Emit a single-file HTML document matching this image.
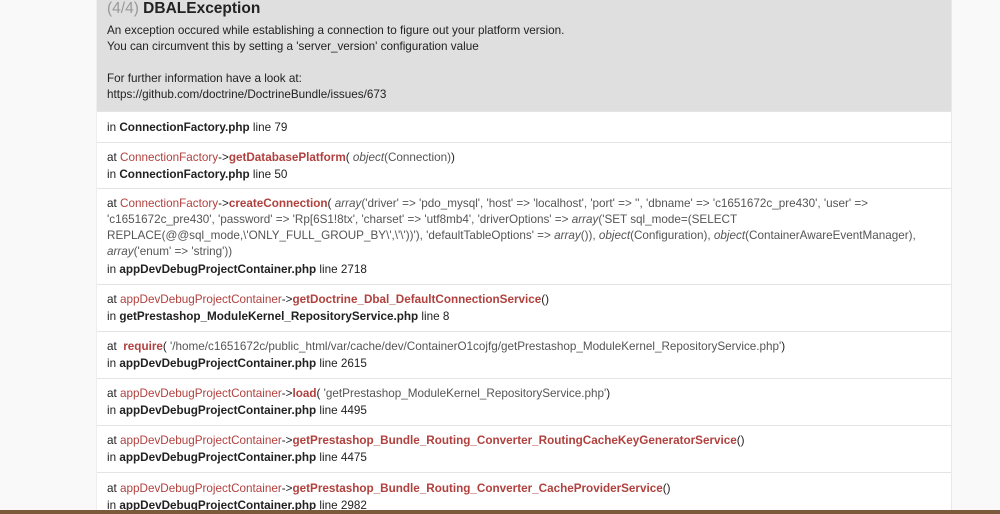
<!DOCTYPE html>
<html><head><meta charset="utf-8"><style>
body{margin:0;width:1000px;height:514px;overflow:hidden;background:#f9f9f9;font-family:"Liberation Sans",Arial,sans-serif;font-size:11.7px;color:#222;position:relative}
#c{position:absolute;left:96px;top:0;width:854px;height:514px;background:#fff;border-right:1px solid #e8e8e8;border-left:1px solid #eee}
#h{position:absolute;left:0;top:0;width:854px;height:111px;background:#dfdfdf}
#h .t{position:absolute;left:10px;top:0px;font-size:15.5px;font-weight:bold;color:#222}
#h .t span{color:#999;font-weight:normal}
#h .m{position:absolute;left:10px;top:23px;line-height:16px;color:#222}
.r{position:absolute;left:0;width:854px;border-top:1px solid #e4e4e4}
.r div{position:absolute;left:10px;white-space:nowrap;line-height:16px}
.a{color:#b0413e}.f{color:#b0413e;font-weight:bold}.g{color:#555}i{color:#555}
b{color:#222}
#bot{position:absolute;left:0;top:510px;width:1000px;height:4px;background:#7a5a3a}
</style></head><body>
<div id="c">
<div id="h"><div class="t"><span>(4/4)</span> DBALException</div>
<div class="m">An exception occured while establishing a connection to figure out your platform version.<br>You can circumvent this by setting a 'server_version' configuration value<br><br>For further information have a look at:<br>https://github.com/doctrine/DoctrineBundle/issues/673</div></div>
<div class="r" style="top:111px"><div style="top:8px">in <b>ConnectionFactory.php</b> line 79</div></div>
<div class="r" style="top:142px"><div style="top:7px">at <span class="a">ConnectionFactory</span>-&gt;<span class="f">getDatabasePlatform</span>( <i>object</i><span class="g">(Connection)</span>)</div><div style="top:24px">in <b>ConnectionFactory.php</b> line 50</div></div>
<div class="r" style="top:188px"><div style="top:7px;line-height:16px">at <span class="a">ConnectionFactory</span>-&gt;<span class="f">createConnection</span>( <span class="g"><i>array</i>('driver' =&gt; 'pdo_mysql', 'host' =&gt; 'localhost', 'port' =&gt; '', 'dbname' =&gt; 'c1651672c_pre430', 'user' =&gt;<br>'c1651672c_pre430', 'password' =&gt; 'Rp[6S1!8tx', 'charset' =&gt; 'utf8mb4', 'driverOptions' =&gt; <i>array</i>('SET sql_mode=(SELECT<br>REPLACE(@@sql_mode,\'ONLY_FULL_GROUP_BY\',\'\'))'), 'defaultTableOptions' =&gt; <i>array</i>()), <i>object</i>(Configuration), <i>object</i>(ContainerAwareEventManager),<br><i>array</i>('enum' =&gt; 'string'))</span></div><div style="top:73px">in <b>appDevDebugProjectContainer.php</b> line 2718</div></div>
<div class="r" style="top:284px"><div style="top:7px">at <span class="a">appDevDebugProjectContainer</span>-&gt;<span class="f">getDoctrine_Dbal_DefaultConnectionService</span>()</div><div style="top:24px">in <b>getPrestashop_ModuleKernel_RepositoryService.php</b> line 8</div></div>
<div class="r" style="top:331px"><div style="top:7px">at &nbsp;<span class="f">require</span>( <span class="g">'/home/c1651672c/public_html/var/cache/dev/ContainerO1cojfg/getPrestashop_ModuleKernel_RepositoryService.php'</span>)</div><div style="top:24px">in <b>appDevDebugProjectContainer.php</b> line 2615</div></div>
<div class="r" style="top:378px"><div style="top:7px">at <span class="a">appDevDebugProjectContainer</span>-&gt;<span class="f">load</span>( <span class="g">'getPrestashop_ModuleKernel_RepositoryService.php'</span>)</div><div style="top:24px">in <b>appDevDebugProjectContainer.php</b> line 4495</div></div>
<div class="r" style="top:425px"><div style="top:7px">at <span class="a">appDevDebugProjectContainer</span>-&gt;<span class="f">getPrestashop_Bundle_Routing_Converter_RoutingCacheKeyGeneratorService</span>()</div><div style="top:24px">in <b>appDevDebugProjectContainer.php</b> line 4475</div></div>
<div class="r" style="top:472px"><div style="top:8px">at <span class="a">appDevDebugProjectContainer</span>-&gt;<span class="f">getPrestashop_Bundle_Routing_Converter_CacheProviderService</span>()</div><div style="top:25px">in <b>appDevDebugProjectContainer.php</b> line 2982</div></div>
</div>
<div id="bot"></div>
</body></html>
